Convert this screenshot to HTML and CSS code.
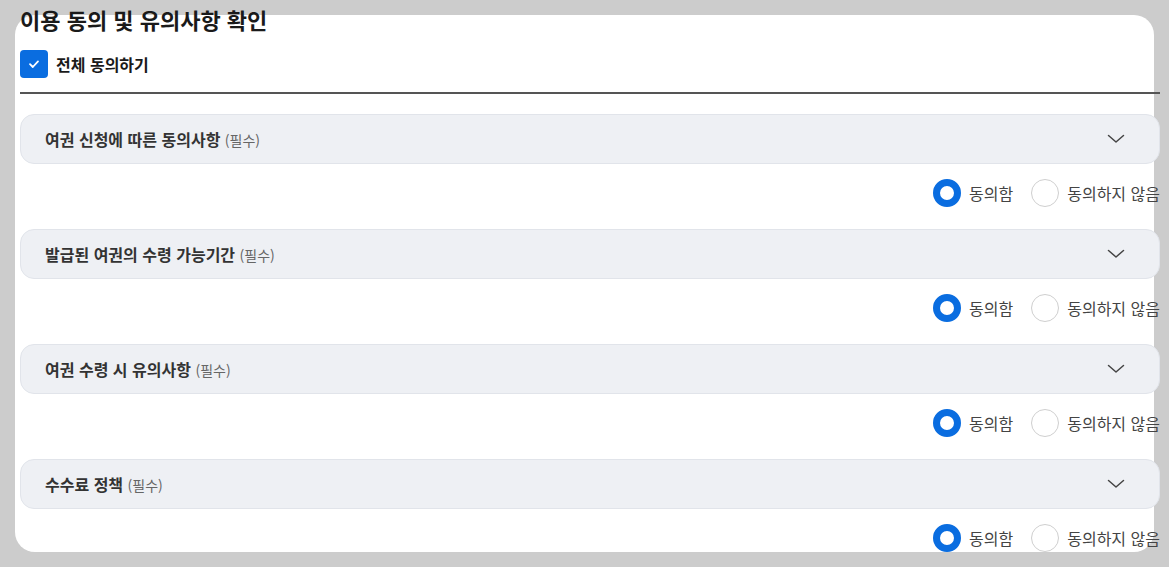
FILE: index.html
```html
<!DOCTYPE html>
<html lang="ko">
<head>
<meta charset="utf-8">
<title>이용 동의 및 유의사항 확인</title>
<link rel="stylesheet" href="styles.css">
</head>
<body>
<div class="card">
  <div class="content">
    <h2 class="title">이용 동의 및 유의사항 확인</h2>
    <label class="all-agree">
      <span class="checkbox">
        <svg width="14" height="14" viewBox="0 0 14 14"><path d="M3 7.2 L5.8 10 L11 4.4" fill="none" stroke="#fff" stroke-width="1.8" stroke-linecap="round" stroke-linejoin="round"/></svg>
      </span>
      <span class="all-label">전체 동의하기</span>
    </label>
    <div class="divider"></div>

    <div class="item">
      <div class="acc">
        <span class="acc-title">여권 신청에 따른 동의사항 <span class="req">(필수)</span></span>
        <svg class="chev" width="18" height="18" viewBox="0 0 18 18"><path d="M1.5 5.5 L9 12 L16.5 5.5" fill="none" stroke="#444" stroke-width="1.5" stroke-linecap="round" stroke-linejoin="round"/></svg>
      </div>
      <div class="radios">
        <span class="radio on"></span><span class="rlabel">동의함</span>
        <span class="radio"></span><span class="rlabel">동의하지 않음</span>
      </div>
    </div>

    <div class="item">
      <div class="acc">
        <span class="acc-title">발급된 여권의 수령 가능기간 <span class="req">(필수)</span></span>
        <svg class="chev" width="18" height="18" viewBox="0 0 18 18"><path d="M1.5 5.5 L9 12 L16.5 5.5" fill="none" stroke="#444" stroke-width="1.5" stroke-linecap="round" stroke-linejoin="round"/></svg>
      </div>
      <div class="radios">
        <span class="radio on"></span><span class="rlabel">동의함</span>
        <span class="radio"></span><span class="rlabel">동의하지 않음</span>
      </div>
    </div>

    <div class="item">
      <div class="acc">
        <span class="acc-title">여권 수령 시 유의사항 <span class="req">(필수)</span></span>
        <svg class="chev" width="18" height="18" viewBox="0 0 18 18"><path d="M1.5 5.5 L9 12 L16.5 5.5" fill="none" stroke="#444" stroke-width="1.5" stroke-linecap="round" stroke-linejoin="round"/></svg>
      </div>
      <div class="radios">
        <span class="radio on"></span><span class="rlabel">동의함</span>
        <span class="radio"></span><span class="rlabel">동의하지 않음</span>
      </div>
    </div>

    <div class="item">
      <div class="acc">
        <span class="acc-title">수수료 정책 <span class="req">(필수)</span></span>
        <svg class="chev" width="18" height="18" viewBox="0 0 18 18"><path d="M1.5 5.5 L9 12 L16.5 5.5" fill="none" stroke="#444" stroke-width="1.5" stroke-linecap="round" stroke-linejoin="round"/></svg>
      </div>
      <div class="radios">
        <span class="radio on"></span><span class="rlabel">동의함</span>
        <span class="radio"></span><span class="rlabel">동의하지 않음</span>
      </div>
    </div>
  </div>
</div>
</body>
</html>
```

FILE: styles.css
```css
html, body {
  margin: 0;
  padding: 0;
}
body {
  background: #cccccc;
  padding: 15px;
  font-family: "Noto Sans CJK KR", "Noto Sans", sans-serif;
  color: #222;
  overflow: hidden;
  height: 567px;
  box-sizing: border-box;
}
.card {
  display: flow-root;
  background: #fff;
  border-radius: 20px;
  height: 537px;
  padding-left: 5px;
  box-sizing: border-box;
}
.content {
  width: 1140px;
}
.title {
  margin: -10px 0 0 0;
  font-size: 22px;
  line-height: 28px;
  font-weight: 700;
  color: #1a1a1a;
}
.all-agree {
  display: flex;
  align-items: center;
  gap: 8px;
  margin-top: 17px;
  height: 28px;
}
.checkbox {
  width: 28px;
  height: 28px;
  border-radius: 4px;
  background: #0a6de0;
  display: flex;
  align-items: center;
  justify-content: center;
}
.all-label {
  font-size: 16px;
  font-weight: 700;
  color: #1a1a1a;
}
.divider {
  margin-top: 14px;
  height: 2px;
  background: #555;
}
.item {
  padding-bottom: 22px;
}
.divider + .item {
  margin-top: 20px;
}
.acc {
  height: 50px;
  box-sizing: border-box;
  border: 1px solid #e1e4ea;
  border-radius: 14px;
  background: #eef0f4;
  display: flex;
  align-items: center;
  justify-content: space-between;
  padding: 0 34px 0 24px;
}
.acc-title {
  font-size: 16px;
  font-weight: 700;
  color: #333;
}
.req {
  font-size: 14px;
  font-weight: 400;
  color: #666;
}
.chev {
  display: block;
}
.radios {
  margin-top: 15px;
  display: flex;
  justify-content: flex-end;
  align-items: center;
  height: 28px;
}
.radio {
  width: 28px;
  height: 28px;
  box-sizing: border-box;
  border-radius: 50%;
  border: 1px solid #cfcfcf;
  background: #fff;
}
.radio.on {
  border: 7px solid #0a6de0;
}
.rlabel {
  font-size: 16px;
  color: #444;
  margin-left: 8px;
  margin-right: 18px;
}
.rlabel:last-child {
  margin-right: 0;
}
```
